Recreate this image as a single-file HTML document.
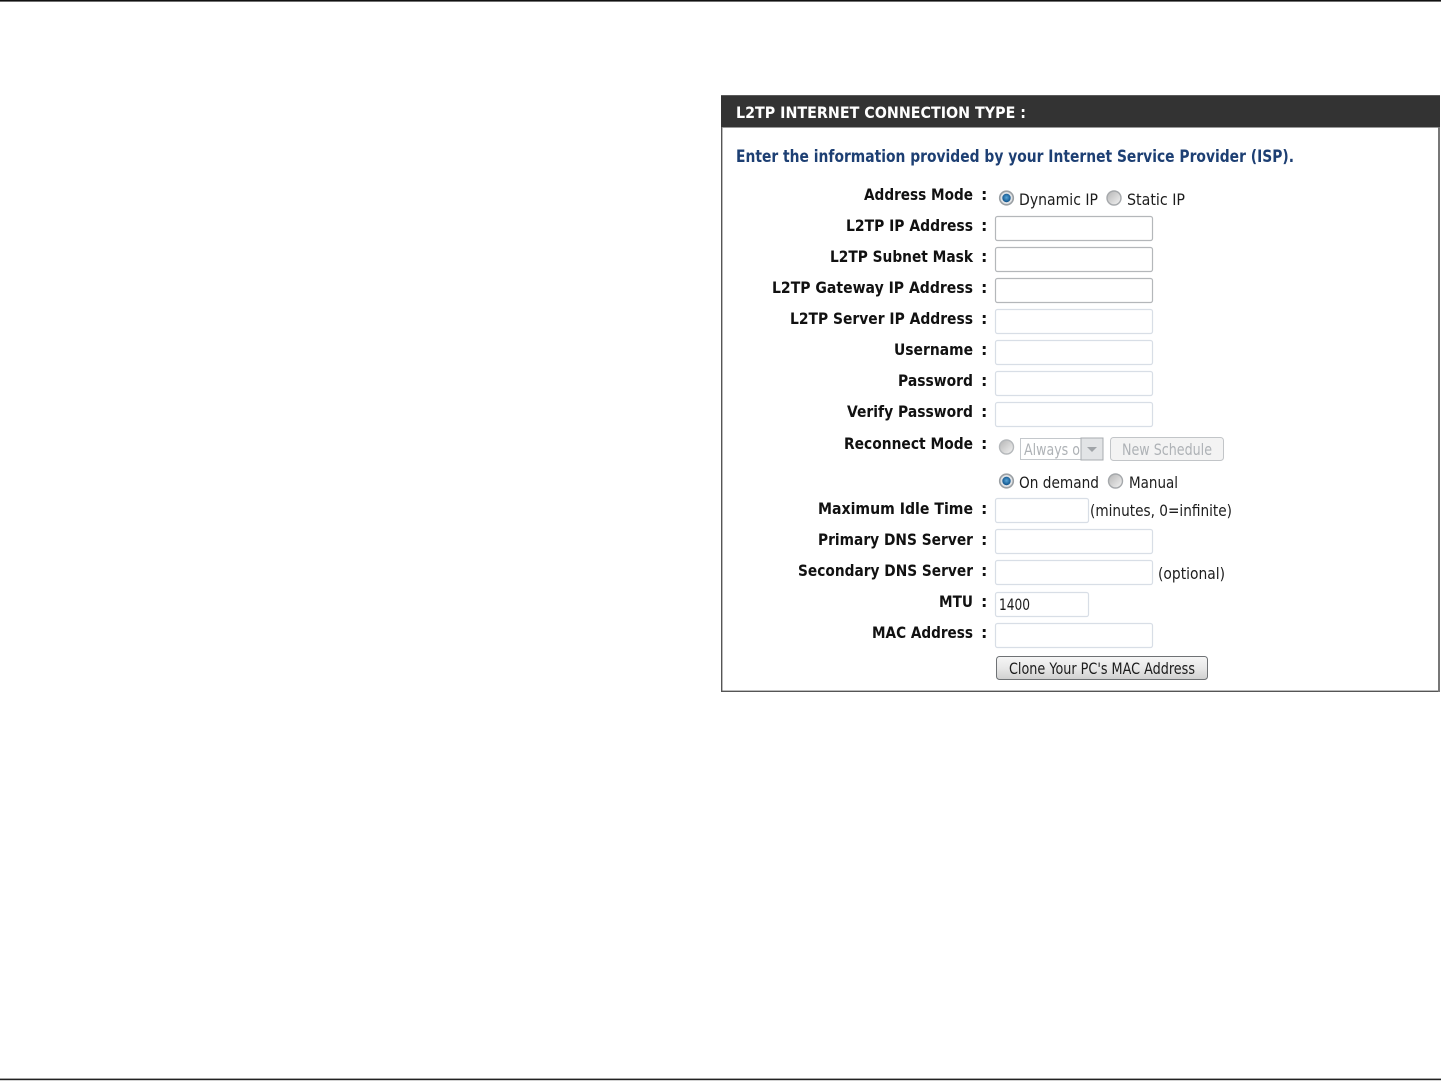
<!DOCTYPE html>
<html>
<head>
<meta charset="utf-8">
<title>L2TP Internet Connection Type</title>
<style>
html,body{margin:0;padding:0;background:#fff;width:1441px;height:1081px;overflow:hidden}
svg{display:block}
text{font-family:"DejaVu Sans","Liberation Sans",sans-serif}
.l{font-weight:bold;font-size:16px;fill:#111}
.t{font-size:16px;fill:#1c1c1c}
.d{font-size:16px;fill:#aeb2b6}
</style>
</head>
<body>
<svg width="1441" height="1081" viewBox="0 0 1441 1081" xmlns="http://www.w3.org/2000/svg">
<defs>
<radialGradient id="on" cx="50%" cy="45%" r="55%"><stop offset="0" stop-color="#5aa6d8"/><stop offset="1" stop-color="#0b4f88"/></radialGradient>
<linearGradient id="off" x1="0" y1="0" x2="1" y2="1"><stop offset="0" stop-color="#b4b4b4"/><stop offset="1" stop-color="#f4f4f4"/></linearGradient>
<linearGradient id="btn" x1="0" y1="0" x2="0" y2="1"><stop offset="0" stop-color="#f6f6f6"/><stop offset=".5" stop-color="#e8e8e8"/><stop offset="1" stop-color="#cfcfcf"/></linearGradient>
</defs>
<rect x="0" y="0" width="1441" height="1.6" fill="#111"/>
<rect x="0" y="1078.6" width="1441" height="1.6" fill="#222"/>

<rect x="721" y="95" width="719" height="597" fill="#555"/>
<rect x="1438" y="127" width="2" height="565" fill="#777"/>
<rect x="722.4" y="127" width="715.6" height="563.6" fill="#fff"/>
<rect x="721" y="95" width="719" height="32" fill="#333"/>
<rect x="721" y="95" width="719" height="1" fill="#5a5a5a"/>
<rect x="722" y="127" width="716" height="1" fill="#999"/>
<text x="736" y="118" font-size="16" font-weight="bold" fill="#fff" textLength="290" lengthAdjust="spacingAndGlyphs">L2TP INTERNET CONNECTION TYPE :</text>
<text x="736" y="162" font-size="16.5" font-weight="bold" fill="#1d3f73" textLength="558" lengthAdjust="spacingAndGlyphs">Enter the information provided by your Internet Service Provider (ISP).</text>

<text class="l" x="864" y="200" textLength="109" lengthAdjust="spacingAndGlyphs">Address Mode</text>
<text class="l" x="846" y="231" textLength="127" lengthAdjust="spacingAndGlyphs">L2TP IP Address</text>
<text class="l" x="830" y="262" textLength="143" lengthAdjust="spacingAndGlyphs">L2TP Subnet Mask</text>
<text class="l" x="772" y="293" textLength="201" lengthAdjust="spacingAndGlyphs">L2TP Gateway IP Address</text>
<text class="l" x="790" y="324" textLength="183" lengthAdjust="spacingAndGlyphs">L2TP Server IP Address</text>
<text class="l" x="894" y="355" textLength="79" lengthAdjust="spacingAndGlyphs">Username</text>
<text class="l" x="898" y="386" textLength="75" lengthAdjust="spacingAndGlyphs">Password</text>
<text class="l" x="847" y="417" textLength="126" lengthAdjust="spacingAndGlyphs">Verify Password</text>
<text class="l" x="844" y="449" textLength="129" lengthAdjust="spacingAndGlyphs">Reconnect Mode</text>
<text class="l" x="818" y="514" textLength="155" lengthAdjust="spacingAndGlyphs">Maximum Idle Time</text>
<text class="l" x="818" y="545" textLength="155" lengthAdjust="spacingAndGlyphs">Primary DNS Server</text>
<text class="l" x="798" y="576" textLength="175" lengthAdjust="spacingAndGlyphs">Secondary DNS Server</text>
<text class="l" x="939" y="607" textLength="34" lengthAdjust="spacingAndGlyphs">MTU</text>
<text class="l" x="872" y="638" textLength="101" lengthAdjust="spacingAndGlyphs">MAC Address</text>

<text class="l" x="981" y="200">:</text>
<text class="l" x="981" y="231">:</text>
<text class="l" x="981" y="262">:</text>
<text class="l" x="981" y="293">:</text>
<text class="l" x="981" y="324">:</text>
<text class="l" x="981" y="355">:</text>
<text class="l" x="981" y="386">:</text>
<text class="l" x="981" y="417">:</text>
<text class="l" x="981" y="449">:</text>
<text class="l" x="981" y="514">:</text>
<text class="l" x="981" y="545">:</text>
<text class="l" x="981" y="576">:</text>
<text class="l" x="981" y="607">:</text>
<text class="l" x="981" y="638">:</text>

<g fill="#fff" stroke="#b4b7ba" stroke-width="1.2">
<rect x="995.5" y="216.5" width="157" height="24" rx="2"/>
<rect x="995.5" y="247.5" width="157" height="24" rx="2"/>
<rect x="995.5" y="278.5" width="157" height="24" rx="2"/>
</g>
<g fill="#fff" stroke="#d8dee6" stroke-width="1.2">
<rect x="995.5" y="309.5" width="157" height="24" rx="2"/>
<rect x="995.5" y="340.5" width="157" height="24" rx="2"/>
<rect x="995.5" y="371.5" width="157" height="24" rx="2"/>
<rect x="995.5" y="402.5" width="157" height="24" rx="2"/>
<rect x="995.5" y="498.5" width="93" height="24" rx="2"/>
<rect x="995.5" y="529.5" width="157" height="24" rx="2"/>
<rect x="995.5" y="560.5" width="157" height="24" rx="2"/>
<rect x="995.5" y="592.5" width="93" height="24" rx="2"/>
<rect x="995.5" y="623.5" width="157" height="24" rx="2"/>
</g>

<g stroke="#9a9fa3" stroke-width="1.6">
<circle cx="1006.5" cy="198" r="6.8" fill="#dfe2e5"/>
<circle cx="1006.5" cy="481" r="6.8" fill="#dfe2e5"/>
</g>
<circle cx="1006.5" cy="198" r="4.2" fill="url(#on)"/>
<circle cx="1006.5" cy="481" r="4.2" fill="url(#on)"/>
<g fill="url(#off)" stroke="#a5a8ab" stroke-width="1.4">
<circle cx="1114" cy="198" r="7"/>
<circle cx="1115.5" cy="481" r="7"/>
</g>
<circle cx="1006.5" cy="447" r="7" fill="url(#off)" stroke="#b5b8bb" stroke-width="1.4"/>

<text class="t" x="1019" y="205" textLength="79" lengthAdjust="spacingAndGlyphs">Dynamic IP</text>
<text class="t" x="1127" y="205" textLength="58" lengthAdjust="spacingAndGlyphs">Static IP</text>
<text class="t" x="1019" y="488" textLength="80" lengthAdjust="spacingAndGlyphs">On demand</text>
<text class="t" x="1129" y="488" textLength="49" lengthAdjust="spacingAndGlyphs">Manual</text>
<text class="t" x="1090" y="516" textLength="142" lengthAdjust="spacingAndGlyphs">(minutes, 0=infinite)</text>
<text class="t" x="1158" y="579" textLength="67" lengthAdjust="spacingAndGlyphs">(optional)</text>
<text class="t" x="999" y="610" font-size="15" textLength="31" lengthAdjust="spacingAndGlyphs">1400</text>

<rect x="1020.5" y="438.5" width="82" height="21" fill="#fff" stroke="#c4c8cc"/>
<rect x="1081" y="438" width="22" height="22" fill="#e2e4e6" stroke="#a8acb0"/>
<path d="M1087 447h10l-5 5z" fill="#a0a4a8"/>
<text class="d" x="1024" y="455" textLength="56" lengthAdjust="spacingAndGlyphs">Always o</text>

<rect x="1110.5" y="437.5" width="113" height="23" rx="3" fill="#f3f3f3" stroke="#c2c5c8"/>
<text class="d" x="1122" y="455" textLength="90" lengthAdjust="spacingAndGlyphs">New Schedule</text>

<rect x="996.5" y="656.5" width="211" height="23" rx="3" fill="url(#btn)" stroke="#6f7275"/>
<text class="t" x="1009" y="674" textLength="186" lengthAdjust="spacingAndGlyphs">Clone Your PC's MAC Address</text>
</svg>
</body>
</html>
